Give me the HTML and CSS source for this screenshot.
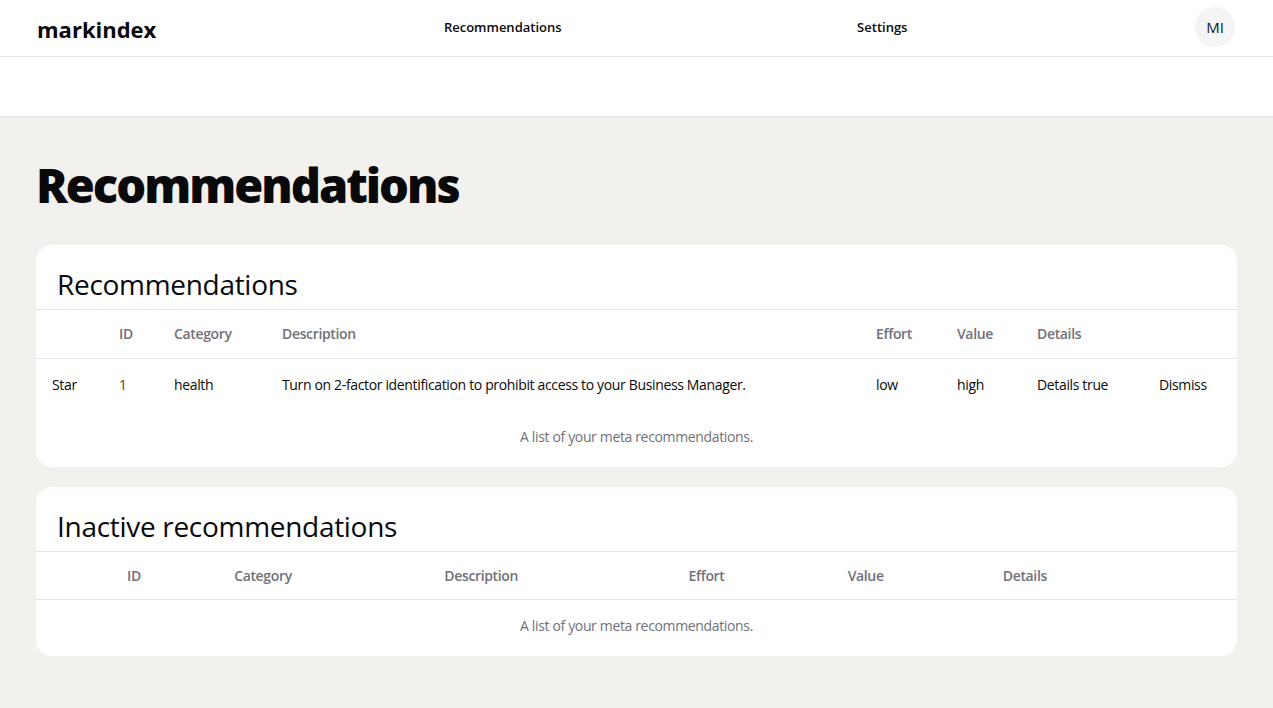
FILE: index.html
```html
<!DOCTYPE html>
<html lang="en">
<head>
<meta charset="utf-8">
<title>markindex</title>
<link rel="stylesheet" href="styles.css">
</head>
<body>
<header class="topbar">
  <a class="logo" href="#">markindex</a>
  <a class="nav-link nav-link-first" href="#">Recommendations</a>
  <a class="nav-link" href="#">Settings</a>
  <div class="avatar">MI</div>
</header>
<div class="subbar"></div>
<main class="page">
  <h1 class="page-title">Recommendations</h1>

  <section class="card">
    <h2 class="card-title">Recommendations</h2>
    <table class="table table-active">
      <thead>
        <tr>
          <th></th>
          <th>ID</th>
          <th>Category</th>
          <th>Description</th>
          <th>Effort</th>
          <th>Value</th>
          <th>Details</th>
          <th></th>
        </tr>
      </thead>
      <tbody>
        <tr>
          <td>Star</td>
          <td class="id">1</td>
          <td>health</td>
          <td>Turn on 2-factor identification to prohibit access to your Business Manager.</td>
          <td>low</td>
          <td>high</td>
          <td>Details true</td>
          <td>Dismiss</td>
        </tr>
      </tbody>
      <caption>A list of your meta recommendations.</caption>
    </table>
  </section>

  <section class="card">
    <h2 class="card-title">Inactive recommendations</h2>
    <table class="table table-inactive">
      <thead>
        <tr>
          <th></th>
          <th>ID</th>
          <th>Category</th>
          <th>Description</th>
          <th>Effort</th>
          <th>Value</th>
          <th>Details</th>
        </tr>
      </thead>
      <tbody></tbody>
      <caption>A list of your meta recommendations.</caption>
    </table>
  </section>
</main>
</body>
</html>
```

FILE: styles.css
```css
* { box-sizing: border-box; }

html, body {
  margin: 0;
  padding: 0;
}

body {
  font-family: "Open Sans", "Noto Sans", sans-serif;
  color: #09090b;
  background: #f3f1ee;
}

a { color: inherit; text-decoration: none; }

.topbar {
  height: 57px;
  background: #ffffff;
  border-bottom: 1px solid #e4e4e7;
  display: flex;
  align-items: center;
  justify-content: space-between;
  padding: 0 38px 0 37px;
}

.logo {
  font-size: 22px;
  font-weight: 700;
  letter-spacing: 0;
  margin-top: 1px;
}

.nav-link {
  font-size: 13px;
  font-weight: 600;
  margin-top: -2px;
}

.nav-link-first {
  margin-right: 8px;
}

.avatar {
  width: 40px;
  height: 40px;
  border-radius: 50%;
  background: #f4f4f5;
  display: flex;
  align-items: center;
  justify-content: center;
  font-size: 15px;
  color: #0f172a;
  margin-top: -2px;
}

.subbar {
  height: 60px;
  background: #ffffff;
  border-bottom: 1px solid #e4e4e7;
}

.page {
  padding: 44px 36px 40px;
}

.page-title {
  margin: 0 0 36px;
  font-size: 47px;
  line-height: 48px;
  font-weight: 800;
  letter-spacing: -2px;
}

.card {
  background: #ffffff;
  border-radius: 16px;
  padding-bottom: 20px;
  margin-bottom: 20px;
}

.card-title {
  margin: 0;
  padding: 21px 21px 7px;
  font-size: 28px;
  line-height: 36px;
  font-weight: 500;
  letter-spacing: -0.3px;
  border-bottom: 1px solid #e4e4e7;
}

.table {
  width: 100%;
  border-collapse: collapse;
  caption-side: bottom;
  font-size: 14px;
  letter-spacing: -0.35px;
}

.table th {
  height: 48px;
  padding: 0 16px;
  text-align: left;
  font-weight: 600;
  color: #71717a;
  border-bottom: 1px solid #e4e4e7;
}

.table td {
  padding: 16px;
  line-height: 20px;
  vertical-align: middle;
}

.table td.id { color: #6b3a12; }

.table caption {
  margin-top: 16px;
  font-size: 14px;
  line-height: 20px;
  color: #71717a;
}

.table-active th:nth-child(1) { width: 67px; }
.table-active th:nth-child(2) { width: 55px; }
.table-active th:nth-child(3) { width: 108px; }
.table-active th:nth-child(5) { width: 81px; }
.table-active th:nth-child(6) { width: 80px; }
.table-active th:nth-child(7) { width: 122px; }
.table-active th:nth-child(8) { width: 94px; }

.table-inactive th:nth-child(1) { width: 75px; }
.table-inactive th:nth-child(2) { width: 107px; }
.table-inactive th:nth-child(3) { width: 210px; }
.table-inactive th:nth-child(4) { width: 244px; }
.table-inactive th:nth-child(5) { width: 159px; }
.table-inactive th:nth-child(6) { width: 155px; }
.table-inactive th:nth-child(7) { width: 250px; }
```
